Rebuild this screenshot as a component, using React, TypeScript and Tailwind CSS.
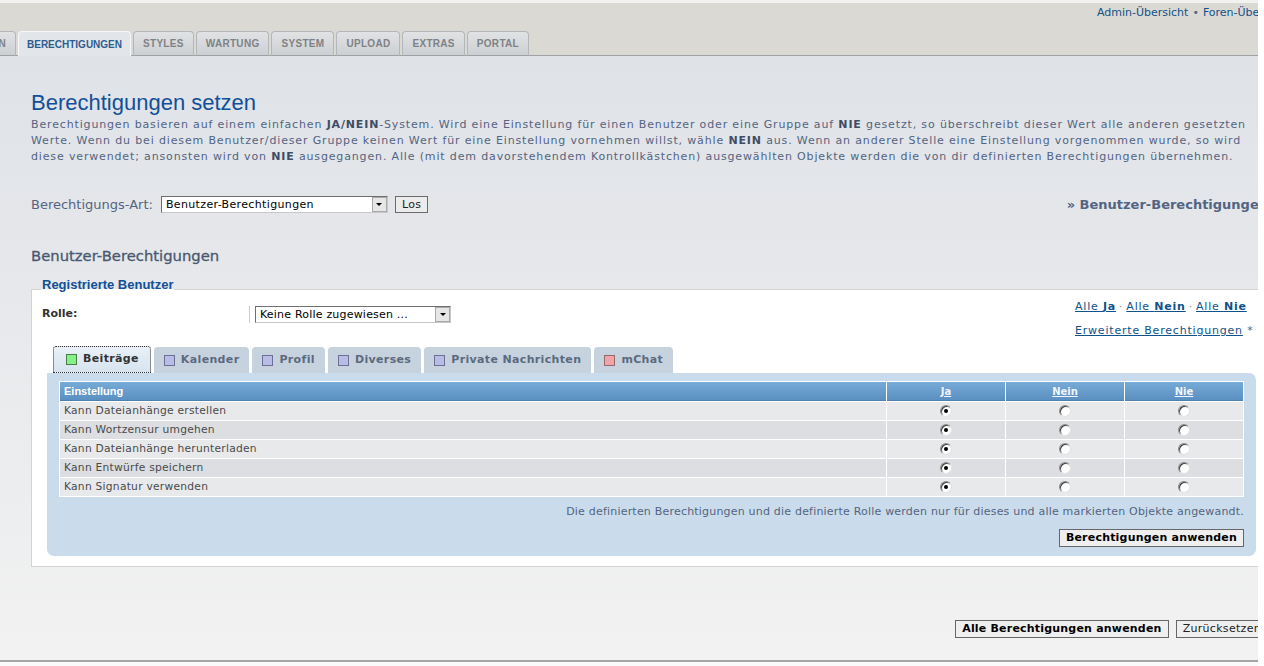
import React from "react";

function Radio({ checked }: { checked?: boolean }) {
  return (
    <span className="w-[12px] h-[12px] rounded-full bg-white border border-[#8a8a8a] border-r-[#e2e2e2] border-b-[#e2e2e2] shadow-[inset_1px_1px_0_#404040] flex items-center justify-center">
      {checked && <span className="w-[4px] h-[4px] rounded-full bg-black" />}
    </span>
  );
}

function Arrow() {
  return (
    <span className="w-[15px] h-[15px] bg-[#e6e6e6] border border-[#a9a9a9] flex items-center justify-center shrink-0">
      <span className="w-0 h-0 border-l-[3px] border-r-[3px] border-t-[3px] border-l-transparent border-r-transparent border-t-black" />
    </span>
  );
}

const rows = [
  "Kann Dateianhänge erstellen",
  "Kann Wortzensur umgehen",
  "Kann Dateianhänge herunterladen",
  "Kann Entwürfe speichern",
  "Kann Signatur verwenden",
];

const innerTabs = [
  { label: "Beiträge", sq: "bg-[#84f284] border-[#4b7d4b]", active: true },
  { label: "Kalender", sq: "bg-[#b9bde6] border-[#6c7096]", active: false },
  { label: "Profil", sq: "bg-[#b9bde6] border-[#6c7096]", active: false },
  { label: "Diverses", sq: "bg-[#b9bde6] border-[#6c7096]", active: false },
  { label: "Private Nachrichten", sq: "bg-[#b9bde6] border-[#6c7096]", active: false },
  { label: "mChat", sq: "bg-[#f3a3a8] border-[#966a6d]", active: false },
];

const topTabs = ["STYLES", "WARTUNG", "SYSTEM", "UPLOAD", "EXTRAS", "PORTAL"];

export default function App() {
  return (
    <div className="w-[1264px] h-[666px] bg-white overflow-hidden font-['DejaVu_Sans',sans-serif]">
      <div className="w-[1258px] h-[666px] overflow-hidden">
        <div className="w-[1299px] h-[666px] flex flex-col">
          {/* header */}
          <div className="h-[56px] shrink-0 bg-[#dbd9d3] border-t-[3px] border-t-[#f2f2f0] border-b border-b-[#9ea1a4] flex flex-col">
            <div className="flex justify-end pr-[9px] pt-[3px] text-[11px] leading-[14px] text-[#105289]">
              <span>Admin-Übersicht</span>
              <span className="mx-[4px] text-[#536482]">•</span>
              <span>Foren-Übersicht</span>
            </div>
            <div className="mt-auto -mb-px flex items-end gap-[2px] font-['Liberation_Sans',sans-serif] text-[10px] font-bold tracking-[0.3px]">
              <div className="w-[16px] h-[25px] overflow-hidden flex items-center justify-end pr-[9px] bg-gradient-to-b from-[#e0e2e4] to-[#cdd0d3] border-t border-r border-b border-[#b4b7ba] border-b-[#9ea1a4] rounded-tr-[4px] text-[#7f8285]">
                N
              </div>
              <div className="h-[25px] px-[8px] flex items-center bg-[#e2e5e9] border border-b-0 border-[#f6f7f8] rounded-t-[4px] text-[#2c5d8f] tracking-[0px]">
                BERECHTIGUNGEN
              </div>
              {topTabs.map((t) => (
                <div
                  key={t}
                  className="h-[25px] px-[9px] flex items-center bg-gradient-to-b from-[#e0e2e4] to-[#cdd0d3] border border-[#b4b7ba] border-b-[#9ea1a4] rounded-t-[4px] text-[#7f8285]"
                >
                  {t}
                </div>
              ))}
            </div>
          </div>

          {/* main */}
          <div className="h-[606px] shrink-0 bg-gradient-to-b from-[#dfe2e7] to-[#f2f2f2] border-b-2 border-[#a5a5a5] px-[31px] pt-[33px]">
            <h1 className="font-['Liberation_Sans',sans-serif] text-[22px] leading-[28px] text-[#115098]">
              Berechtigungen setzen
            </h1>
            <div className="text-[11px] leading-[16px] text-[#536482] tracking-[0.85px]">
              <div className="whitespace-nowrap">
                Berechtigungen basieren auf einem einfachen <b className="text-[#3d4d66]">JA/NEIN</b>-System. Wird eine Einstellung für einen Benutzer oder eine Gruppe auf <b className="text-[#3d4d66]">NIE</b> gesetzt, so überschreibt dieser Wert alle anderen gesetzten
              </div>
              <div className="whitespace-nowrap">
                Werte. Wenn du bei diesem Benutzer/dieser Gruppe keinen Wert für eine Einstellung vornehmen willst, wähle <b className="text-[#3d4d66]">NEIN</b> aus. Wenn an anderer Stelle eine Einstellung vorgenommen wurde, so wird
              </div>
              <div className="whitespace-nowrap">
                diese verwendet; ansonsten wird von <b className="text-[#3d4d66]">NIE</b> ausgegangen. Alle (mit dem davorstehendem Kontrollkästchen) ausgewählten Objekte werden die von dir definierten Berechtigungen übernehmen.
              </div>
            </div>

            {/* selector row */}
            <div className="mt-[31px] h-[17px] flex items-center justify-between">
              <div className="flex items-center">
                <span className="text-[13px] leading-[16px] text-[#536482]">Berechtigungs-Art:</span>
                <div className="ml-[8px] w-[227px] h-[17px] border border-[#6f6f6f] border-r-[#c8c8c8] border-b-[#c8c8c8] bg-white flex items-center">
                  <span className="flex-1 pl-[4px] text-[11px] leading-[14px] text-black tracking-[0.35px]">Benutzer-Berechtigungen</span>
                  <Arrow />
                </div>
                <button className="ml-[7px] h-[17px] px-[6px] border border-[#6b6b6b] bg-[#ececec] text-[11px] leading-[14px] text-[#222] tracking-[0.3px]">
                  Los
                </button>
              </div>
              <span className="text-[13px] leading-[16px] font-bold text-[#536482]">» Benutzer-Berechtigungen</span>
            </div>

            <h2 className="mt-[34px] text-[14.8px] leading-[18px] text-[#4a5870] [-webkit-text-stroke:0.3px_#4a5870]">
              Benutzer-Berechtigungen
            </h2>

            {/* fieldset */}
            <fieldset className="mt-[14px] border border-[#d3d3d3] bg-white px-[10px] pb-[10px] pt-0 m-0 min-w-0">
              <legend className="ml-[-1px] px-[1px] pb-[8px] font-['Liberation_Sans',sans-serif] text-[13px] leading-[12px] font-bold text-[#115098]">
                Registrierte Benutzer
              </legend>
              <div className="flex items-start">
                <div className="flex-1 mt-[7px] flex items-center h-[17px]">
                  <span className="w-[207px] text-[11px] font-bold text-[#333]">Rolle:</span>
                  <div className="border-l border-[#cccccc] pl-[5px] h-[17px] flex items-center">
                    <div className="w-[196px] h-[17px] border border-[#6f6f6f] border-r-[#c8c8c8] border-b-[#c8c8c8] bg-white flex items-center">
                      <span className="flex-1 pl-[4px] text-[11px] leading-[14px] text-black tracking-[0.2px]">Keine Rolle zugewiesen ...</span>
                      <Arrow />
                    </div>
                  </div>
                </div>
                <div className="w-[182px] pr-[3px] flex flex-col gap-[8px] text-[11px] leading-[16px] tracking-[0.8px]">
                  <div className="text-[#105289] whitespace-nowrap">
                    <span className="underline">Alle <b>Ja</b></span>
                    <span className="text-[#8a8a8a] mx-[3px]">·</span>
                    <span className="underline">Alle <b>Nein</b></span>
                    <span className="text-[#8a8a8a] mx-[3px]">·</span>
                    <span className="underline">Alle <b>Nie</b></span>
                  </div>
                  <div className="whitespace-nowrap">
                    <span className="underline text-[#105289]">Erweiterte Berechtigungen</span>
                    <span className="text-[#666]"> *</span>
                  </div>
                </div>
              </div>

              {/* inner tabs */}
              <div className="mt-[7px] ml-[11px] flex items-end gap-[3px] h-[27px] tracking-[0.35px]">
                {innerTabs.map((t) => (
                  <div
                    key={t.label}
                    className={
                      t.active
                        ? "h-[27px] pl-[12px] pr-[11px] flex items-center gap-[6px] rounded-t-[3px] bg-gradient-to-b from-[#e9f0f7] to-[#d6e3ef] border border-dotted border-[#333] text-[11px] font-bold text-[#333]"
                        : "h-[26px] px-[10px] flex items-center gap-[6px] rounded-t-[4px] bg-[#c6d2de] text-[11px] font-bold text-[#5c6a7f]"
                    }
                  >
                    <span className={`w-[11px] h-[11px] border ${t.sq}`} />
                    <span>{t.label}</span>
                  </div>
                ))}
              </div>

              {/* panel */}
              <div className="ml-[5px] mr-[1px] bg-[#cadceb] rounded-[7px] rounded-tl-none px-[12px] pt-[8px] pb-[9px]">
                <div className="bg-white p-px grid grid-cols-[1fr_118px_118px_118px] gap-px">
                  <div className="h-[19px] bg-gradient-to-b from-[#77abd7] to-[#5a8fc1] border-b border-[#4f81ae] pl-[4px] flex items-center font-['Liberation_Sans',sans-serif] text-[11px] font-bold text-white">
                    Einstellung
                  </div>
                  {["Ja", "Nein", "Nie"].map((h) => (
                    <div
                      key={h}
                      className="h-[19px] bg-gradient-to-b from-[#77abd7] to-[#5a8fc1] border-b border-[#4f81ae] flex items-center justify-center text-[10px] font-bold underline text-[#eef5fc]"
                    >
                      {h}
                    </div>
                  ))}
                  {rows.map((r, i) => {
                    const bg = i % 2 === 0 ? "bg-[#e7e9eb]" : "bg-[#dcdee1]";
                    return (
                      <React.Fragment key={r}>
                        <div className={`h-[18px] ${bg} pl-[4px] flex items-center text-[10.7px] text-[#4a4a4a] tracking-[0.25px]`}>{r}</div>
                        <div className={`h-[18px] ${bg} flex items-center justify-center`}>
                          <Radio checked />
                        </div>
                        <div className={`h-[18px] ${bg} flex items-center justify-center`}>
                          <Radio />
                        </div>
                        <div className={`h-[18px] ${bg} flex items-center justify-center`}>
                          <Radio />
                        </div>
                      </React.Fragment>
                    );
                  })}
                </div>
                <div className="mt-[7px] text-right text-[11px] leading-[16px] text-[#536482] tracking-[0.2px]">
                  Die definierten Berechtigungen und die definierte Rolle werden nur für dieses und alle markierten Objekte angewandt.
                </div>
                <div className="mt-[9px] flex justify-end">
                  <button className="h-[18px] px-[6px] border border-[#666] bg-[#efefef] text-[11px] leading-[14px] font-bold text-black tracking-[0.2px]">
                    Berechtigungen anwenden
                  </button>
                </div>
              </div>
            </fieldset>

            <div className="mt-[53px] flex justify-end gap-[7px]">
              <button className="h-[18px] px-[6px] border border-[#666] bg-[#efefef] text-[11px] leading-[14px] font-bold text-black tracking-[0.2px]">
                Alle Berechtigungen anwenden
              </button>
              <button className="h-[18px] px-[6px] border border-[#666] bg-[#efefef] text-[11px] leading-[14px] text-[#222] tracking-[0.3px]">
                Zurücksetzen
              </button>
            </div>
          </div>
          <div className="flex-1 bg-[#fafafa]" />
        </div>
      </div>
    </div>
  );
}
